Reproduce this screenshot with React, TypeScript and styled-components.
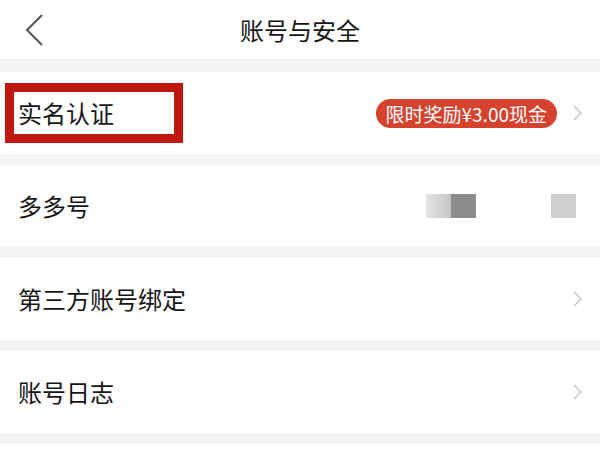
import React from 'react';
import styled, { createGlobalStyle } from 'styled-components';

const GlobalStyle = createGlobalStyle`
  html, body {
    margin: 0;
    padding: 0;
    background: #f4f4f4;
  }
  body {
    font-family: "Noto Sans CJK SC", "Noto Sans", sans-serif;
    color: #151516;
  }
`;

const Page = styled.div`
  width: 600px;
  height: 450px;
  overflow: hidden;
  background: #f4f4f4;
`;

const Header = styled.header`
  display: flex;
  align-items: center;
  justify-content: center;
  position: relative;
  height: 60px;
  background: #fff;
  border-bottom: 1px solid #ececec;
  box-sizing: border-box;
  margin-bottom: 12px;
`;

const BackButton = styled.button`
  position: absolute;
  left: 22px;
  top: 13px;
  width: 28px;
  height: 34px;
  padding: 0;
  border: none;
  background: none;
`;

const Title = styled.h1`
  margin: 0;
  font-size: 24px;
  font-weight: 400;
  letter-spacing: 0;
`;

const List = styled.div`
  display: flex;
  flex-direction: column;
  gap: 11px;
`;

const Row = styled.div`
  display: flex;
  flex-shrink: 0;
  align-items: center;
  height: 82px;
  padding: 0 16px 0 18px;
  background: #fff;
`;

const Label = styled.span<{ $boxed?: boolean }>`
  font-size: 24px;
  line-height: 1;
  flex: 1;
  ${(p) =>
    p.$boxed &&
    `
    flex: none;
    margin-left: -13px;
    padding: 9px 60px 9px 4px;
    border: 9px solid #c0170f;
  `}
`;

const Spacer = styled.div`
  flex: 1;
`;

const Badge = styled.span`
  display: inline-flex;
  align-items: center;
  height: 29px;
  padding: 0 10px;
  margin-right: 15px;
  border-radius: 15px;
  background: #d5432f;
  color: #fff;
  font-size: 19px;
  line-height: 1;
`;

const Masked = styled.div`
  display: flex;
  align-items: center;
  margin-right: 8px;
`;

const Block = styled.span<{ $tone: string; $gap?: number }>`
  width: 25px;
  height: 24px;
  background: ${(p) => p.$tone};
  margin-left: ${(p) => p.$gap ?? 0}px;
  filter: blur(0.6px);
`;

const Chevron = () => (
  <svg width="12" height="18" viewBox="0 0 12 18">
    <path d="M2 2 L9 9 L2 16" fill="none" stroke="#c9c9c9" strokeWidth="1.6" />
  </svg>
);

const BackIcon = () => (
  <svg width="28" height="34" viewBox="0 0 28 34">
    <path d="M20 2 L5 17 L20 32" fill="none" stroke="#555" strokeWidth="2" />
  </svg>
);

const App = () => {
  return (
    <>
      <GlobalStyle />
      <Page>
        <Header>
          <BackButton>
            <BackIcon />
          </BackButton>
          <Title>账号与安全</Title>
        </Header>
        <List>
          <Row>
            <Label $boxed>实名认证</Label>
            <Spacer />
            <Badge>限时奖励¥3.00现金</Badge>
            <Chevron />
          </Row>
          <Row>
            <Label>多多号</Label>
            <Masked>
              <Block $tone="linear-gradient(90deg, #e6e6e6, #c4c4c4)" />
              <Block $tone="#8c8c8c" />
              <Block $tone="#cfcfcf" $gap={75} />
            </Masked>
          </Row>
          <Row>
            <Label>第三方账号绑定</Label>
            <Chevron />
          </Row>
          <Row>
            <Label>账号日志</Label>
            <Chevron />
          </Row>
          <Row />
        </List>
      </Page>
    </>
  );
};

export default App;
